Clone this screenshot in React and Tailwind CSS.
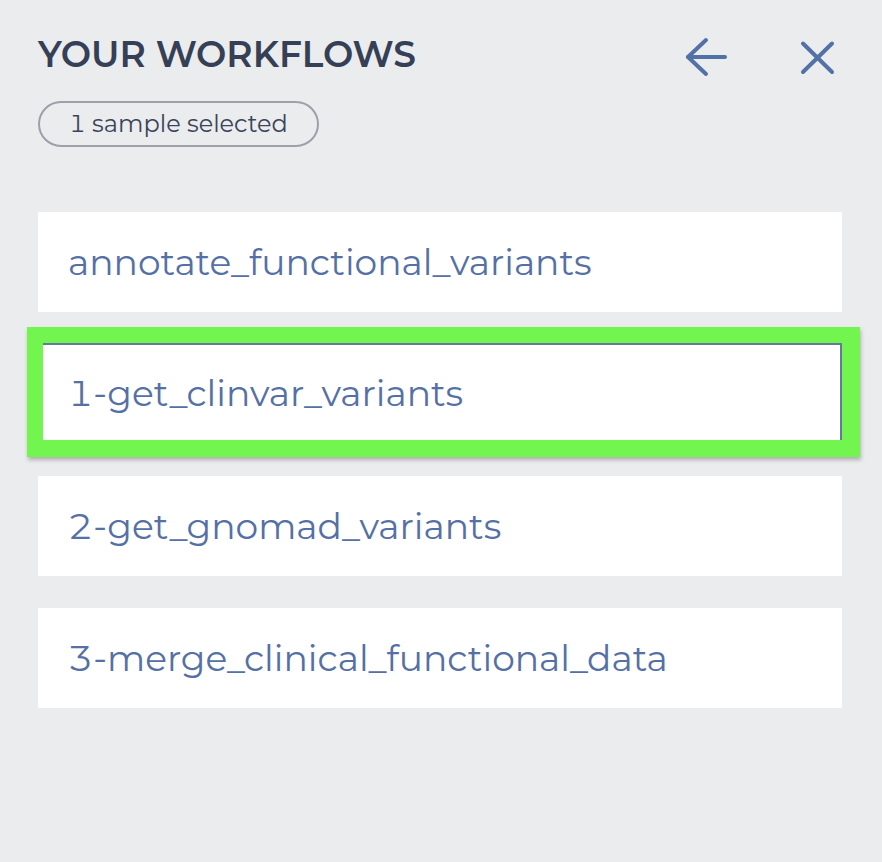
const workflows = [
  'annotate_functional_variants',
  '1-get_clinvar_variants',
  '2-get_gnomad_variants',
  '3-merge_clinical_functional_data',
];

const font = { fontFamily: 'Montserrat, "Open Sans", "DejaVu Sans", sans-serif' };

export default function App() {
  return (
    <div className="min-h-[862px] w-[882px] bg-[#ebecee] pl-[38px] pr-[40px] pt-[34px] tabular-nums" style={font}>
      <div className="flex h-[40px] items-start justify-between">
        <h1 className="text-[36px] leading-[40px] font-semibold text-[#353f55]">YOUR WORKFLOWS</h1>
        <div className="flex items-start gap-[69px] pr-[6px]">
          <button className="mt-[1px] text-[#5271a6]">
            <svg width="46" height="44" viewBox="0 0 46 44" fill="none" stroke="currentColor" strokeWidth="4" strokeLinecap="round" strokeLinejoin="round">
              <path d="M5 22H42" />
              <path d="M23 5L5 22L23 39" />
            </svg>
          </button>
          <button className="mt-[5px] text-[#5271a6]">
            <svg width="38" height="37" viewBox="0 0 38 37" fill="none" stroke="currentColor" strokeWidth="4" strokeLinecap="round">
              <path d="M5 4.5L34 33" />
              <path d="M34 4.5L5 33" />
            </svg>
          </button>
        </div>
      </div>

      <div className="mt-[27px] inline-flex h-[46px] items-center rounded-full border-2 border-[#9ca0a8] px-[29px] text-[24px] text-[#3b4559]">
        1 sample selected
      </div>

      <div className="mt-[65px] flex flex-col gap-[32px]">
        {workflows.map((name, i) =>
          i === 1 ? (
            <div key={name} className="-ml-[11px] -mr-[18px] -mt-[17px] -mb-[13px] bg-[#72f54f] pl-[16px] pr-[18px] pt-[16px] pb-[17px] shadow-[1px_3px_4px_rgba(0,0,0,0.25)]">
              <div className="flex h-[97px] items-center border-t-2 border-r-2 border-[#64799c] bg-white pl-[25px] pr-[16px] text-[36px] text-[#5570a5]">
                {name}
              </div>
            </div>
          ) : (
            <div key={name} className="flex h-[100px] items-center bg-white px-[30px] text-[36px] text-[#5570a5]">
              {name}
            </div>
          )
        )}
      </div>
    </div>
  );
}
